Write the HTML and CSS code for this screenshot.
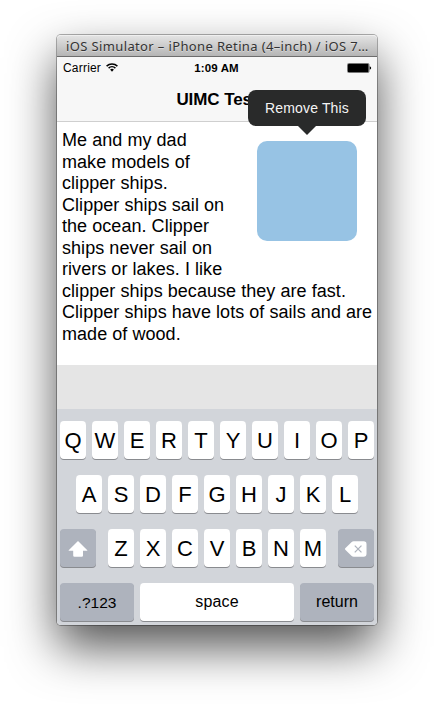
FILE: index.html
```html
<!DOCTYPE html>
<html lang="en">
<head>
<meta charset="utf-8">
<title>iOS Simulator</title>
<link rel="stylesheet" href="styles.css">
</head>
<body>
<div class="window">
  <div class="titlebar"><span>iOS Simulator – iPhone Retina (4–inch) / iOS 7…</span></div>
  <div class="screen">
    <header class="top">
      <div class="status">
        <div class="carrier"><span>Carrier</span>
          <svg class="wifi" width="12" height="9" viewBox="0 0 12 9"><path d="M.6 3.1a7.8 7.8 0 0 1 10.8 0M2.6 5.1a4.9 4.9 0 0 1 6.8 0" fill="none" stroke="#000" stroke-width="1.5"/><path d="M4.1 6.6a2.8 2.8 0 0 1 3.8 0L6 8.7z"/></svg>
        </div>
        <span class="time">1:09 AM</span>
        <svg class="battery" width="25" height="10" viewBox="0 0 25 10"><rect x=".5" y=".5" width="21.5" height="9" rx="1" fill="none" stroke="#777" stroke-width="1"/><rect x="1" y="1" width="20.5" height="8" rx=".5"/><path d="M22.7 3.2q1.5.5 1.5 1.8t-1.5 1.8z"/></svg>
      </div>
      <div class="nav">UIMC Test</div>
    </header>
    <main class="editor">
      <div class="block"><div class="popover">Remove This<svg class="arrow" width="18" height="9" viewBox="0 0 18 9"><path d="M0 0h18L9 9z" fill="#292a2a"/></svg></div></div>
      <p class="copy">Me and my dad<br>make models of<br>clipper ships.<br>Clipper ships sail on<br>the ocean. Clipper<br>ships never sail on<br>rivers or lakes. I like<br>clipper ships because they are fast.<br>Clipper ships have lots of sails and are<br>made of wood.</p>
    </main>
    <div class="accessory"></div>
    <div class="keyboard">
      <div class="row"><b class="key">Q</b><b class="key">W</b><b class="key">E</b><b class="key">R</b><b class="key">T</b><b class="key">Y</b><b class="key">U</b><b class="key">I</b><b class="key">O</b><b class="key">P</b></div>
      <div class="row"><b class="key">A</b><b class="key">S</b><b class="key">D</b><b class="key">F</b><b class="key">G</b><b class="key">H</b><b class="key">J</b><b class="key">K</b><b class="key">L</b></div>
      <div class="row">
        <b class="key dark shift"><svg width="20" height="16" viewBox="0 0 20 16"><path d="M10 0 19.3 9.2q.3.5-.3.5h-4v4.800q0 1.300-1.300 1.300H6.500q-1.300 0-1.300-1.300V9.700H1q-.600 0-.300-.500z" fill="#fff"/></svg></b>
        <b class="key">Z</b><b class="key">X</b><b class="key">C</b><b class="key">V</b><b class="key">B</b><b class="key">N</b><b class="key">M</b>
        <b class="key dark delete"><svg width="22" height="16" viewBox="0 0 23 16"><path d="M.3 7.300 7 .8Q7.800 0 9 0h10.500Q22.500 0 22.500 3v10q0 3-3 3H9q-1.200 0-2-.8L.3 8.700q-.6-.7 0-1.400z" fill="#fff"/><path d="m10.200 4.500 7 7m0-7-7 7" stroke="#aeb3bd" stroke-width="1.300"/></svg></b>
      </div>
      <div class="row"><b class="key dark word num">.?123</b><b class="key word space">space</b><b class="key dark word">return</b></div>
    </div>
  </div>
</div>
</body>
</html>
```
FILE: styles.css
```css
* { box-sizing: border-box; }
body {
  margin: 0;
  height: 704px;
  padding: 35px 57px 0;
  overflow: hidden;
  background: #fff;
  font-family: "Liberation Sans", sans-serif;
  color: #000;
}
.window {
  width: 320px;
  border-radius: 4px;
  box-shadow: 0 0 0 1px rgba(0, 0, 0, .3), 0 22px 48px rgba(0, 0, 0, .68);
}
.titlebar {
  height: 22px;
  padding-left: 9px;
  border-top: 1px solid #efefef;
  border-bottom: 1px solid #6d6d6d;
  border-radius: 4px 4px 0 0;
  background: linear-gradient(#e2e2e2, #b5b5b5);
  font: 13px/20px "Noto Sans", sans-serif;
  letter-spacing: .37px;
  color: #333;
  text-shadow: 0 1px 0 rgba(255, 255, 255, .4);
  white-space: nowrap;
}
.screen { border-radius: 0 0 4px 4px; overflow: hidden; }
.top { height: 65px; background: #f7f7f7; border-bottom: 1px solid #cfcfcf; }
.status {
  display: grid;
  grid-template-columns: 1fr auto 1fr;
  align-items: center;
  height: 20px;
  padding: 1px 5px 0 6px;
  font-size: 12px;
}
.carrier { display: flex; align-items: center; gap: 5px; letter-spacing: .2px; }
.time { font-weight: bold; font-size: 11.500px; letter-spacing: .15px; margin-right: 2px; }
.battery { justify-self: end; }
.nav { padding-top: 1px; text-align: center; font-weight: bold; font-size: 17px; line-height: 43px; letter-spacing: -.08px; }
.editor { height: 243px; padding: 8px 5px 0; background: #fff; }
.block {
  position: relative;
  float: right;
  width: 100px;
  height: 100px;
  margin: 11px 15px 0 0;
  border-radius: 10px;
  background: #97c3e4;
}
.popover {
  position: absolute;
  left: -9px;
  top: -51px;
  width: 118px;
  height: 36px;
  border-radius: 8px;
  background: #292a2a;
  color: #f4f4f4;
  font-size: 14px;
  line-height: 36px;
  letter-spacing: .15px;
  text-align: center;
}
.arrow { position: absolute; left: 50%; top: 36px; margin-left: -9px; }
.copy { margin: 0; font-size: 18px; line-height: 21.500px; letter-spacing: .05px; white-space: nowrap; }
.accessory { height: 44px; background: #e5e5e5; }
.keyboard {
  display: flex;
  flex-direction: column;
  gap: 16px;
  height: 216px;
  padding: 12px 3px 0;
  background: #d2d5da;
}
.row { display: flex; justify-content: center; gap: 6px; }
.key {
  display: flex;
  align-items: center;
  justify-content: center;
  width: 26px;
  height: 38px;
  padding-top: 1px;
  border-radius: 4px;
  background: #fff;
  box-shadow: 0 1px 0 #898b8f;
  font-size: 22px;
  font-weight: normal;
}
.dark { width: 36px; background: #aeb3bd; }
.shift { margin-right: 6px; }
.delete { margin-left: 6px; }
.word { width: 74px; font-size: 16px; padding: 0 0 1px; }
.num { padding: 1px 0 0; font-size: 15.500px; }
.space { width: 154px; letter-spacing: .15px; }
```
